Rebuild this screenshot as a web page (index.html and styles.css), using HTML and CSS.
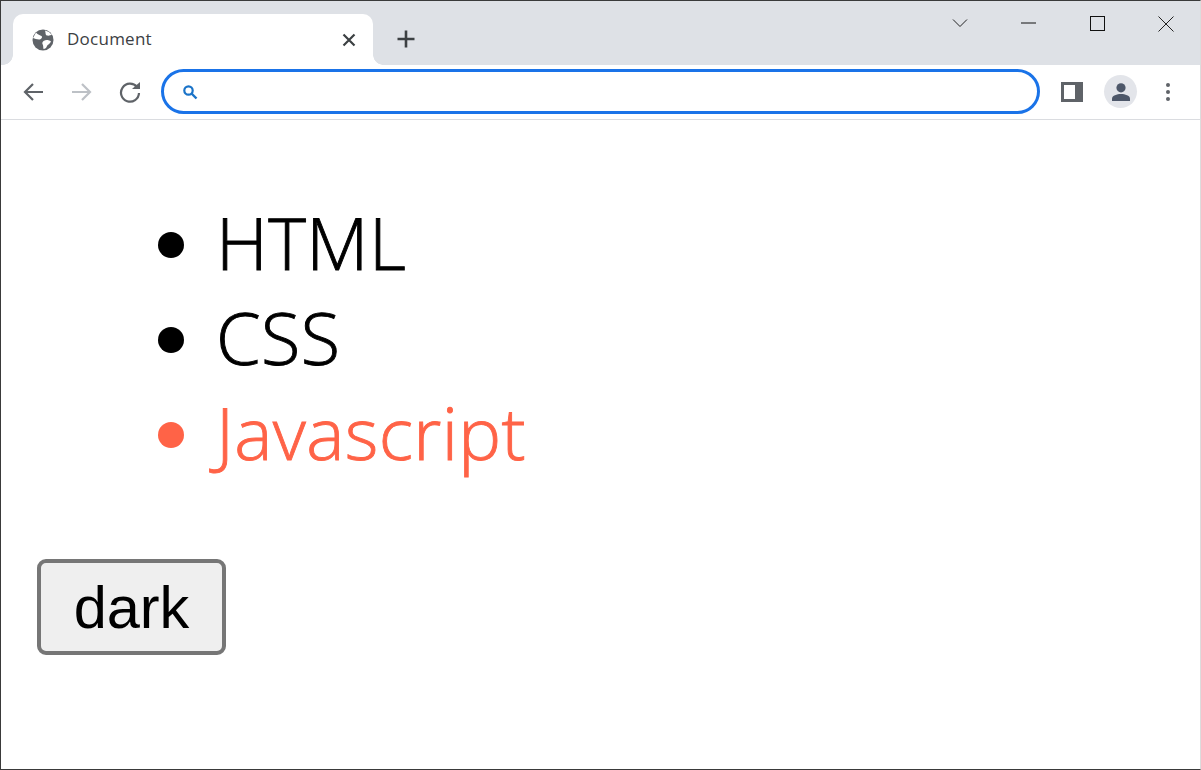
FILE: index.html
```html
<!DOCTYPE html>
<html lang="en">
<head>
    <meta charset="UTF-8">
    <title>Document</title>
    <link rel="stylesheet" href="styles.css">
</head>
<body>
    <div class="window">
        <!-- Tab strip -->
        <div class="tabstrip">
            <div class="tab">
                <svg class="favicon" width="22" height="22" viewBox="0 0 22 22">
                    <circle cx="11" cy="11" r="10.5" fill="#5f6368"/>
                    <path d="M4 3.5 C6 6 8 6 9.5 7 C11 8.5 9 10.5 7 10.5 C4.5 10.5 3 9.5 1 9 Z" fill="#fff"/>
                    <path d="M13 1.5 C14 4 13 6 15 6.5 C17 7 18.5 6 20 6 L17 3 Z" fill="#fff"/>
                    <path d="M11.5 12 C14 10.5 17 11 19 12.5 C18 15 15.5 15.5 15 17 C14.5 19 13 20 11.5 20 C11 18 11.5 16.5 10.5 15 C10 14 10.5 12.8 11.5 12 Z" fill="#fff"/>
                </svg>
                <span class="tab-title">Document</span>
                <svg class="tab-close" width="14" height="14" viewBox="0 0 14 14">
                    <path d="M1.5 1.5 L12.5 12.5 M12.5 1.5 L1.5 12.5" stroke="#3c4043" stroke-width="2.2"/>
                </svg>
            </div>
            <svg class="new-tab" width="20" height="20" viewBox="0 0 20 20">
                <path d="M10 1.5 V18.5 M1.5 10 H18.5" stroke="#3c4043" stroke-width="2.6"/>
            </svg>
            <div class="window-controls">
                <svg class="ctl-chevron" width="16" height="10" viewBox="0 0 16 10">
                    <path d="M1 1.5 L8 8.5 L15 1.5" fill="none" stroke="#222" stroke-width="1"/>
                </svg>
                <svg class="ctl-min" width="16" height="2" viewBox="0 0 16 2">
                    <path d="M0 1 H15" stroke="#111" stroke-width="1"/>
                </svg>
                <svg class="ctl-max" width="15" height="15" viewBox="0 0 15 15">
                    <rect x="0.5" y="0.5" width="14" height="14" fill="none" stroke="#111" stroke-width="1"/>
                </svg>
                <svg class="ctl-close" width="16" height="16" viewBox="0 0 16 16">
                    <path d="M0.5 0.5 L15.5 15.5 M15.5 0.5 L0.5 15.5" stroke="#222" stroke-width="1"/>
                </svg>
            </div>
        </div>

        <!-- Toolbar -->
        <div class="toolbar">
            <svg class="nav-btn nav-back" width="22" height="20" viewBox="0 0 22 20">
                <path d="M21 10 H3 M11 2 L3 10 L11 18" fill="none" stroke="#5f6368" stroke-width="2.2"/>
            </svg>
            <svg class="nav-btn" width="22" height="20" viewBox="0 0 22 20">
                <path d="M1 10 H19 M11 2 L19 10 L11 18" fill="none" stroke="#bdc1c6" stroke-width="2.2"/>
            </svg>
            <svg class="nav-btn" width="22" height="22" viewBox="0 0 22 22">
                <path d="M18 6 A9 9 0 1 0 20 12" fill="none" stroke="#5f6368" stroke-width="2.2"/>
                <path d="M13 8 H21 V1 Z" fill="#5f6368"/>
            </svg>
            <div class="omnibox">
                <svg width="16" height="16" viewBox="0 0 16 16">
                    <circle cx="6.5" cy="6.5" r="4.2" fill="none" stroke="#1a73c8" stroke-width="2.2"/>
                    <path d="M9.5 9.5 L14.5 14.5" stroke="#1a73c8" stroke-width="2.4"/>
                </svg>
            </div>
            <svg class="side-panel" width="22" height="20" viewBox="0 0 22 20">
                <path d="M0 0 H22 V20 H0 Z M3 3 V17 H14 V3 Z" fill="#5f6368" fill-rule="evenodd"/>
            </svg>
            <div class="avatar">
                <svg width="20" height="20" viewBox="0 0 20 20">
                    <circle cx="10" cy="5.8" r="4.6" fill="#4d5769"/>
                    <path d="M1 19 V16.5 C1 13.5 6 12 10 12 C14 12 19 13.5 19 16.5 V19 Z" fill="#4d5769"/>
                </svg>
            </div>
            <div class="menu-dots"><i></i><i></i><i></i></div>
        </div>

        <!-- Page -->
        <div class="page">
            <ul class="langs">
                <li>HTML</li>
                <li>CSS</li>
                <li class="active">Javascript</li>
            </ul>
            <button class="theme-btn">dark</button>
        </div>
    </div>
</body>
</html>
```

FILE: styles.css
```css
html, body {
    margin: 0;
    height: 100%;
    background: #fff;
}

.window {
    box-sizing: border-box;
    height: 770px;
    border: 1px solid #3a3a3a;
    border-right-color: #dcdcdc;
    display: flex;
    flex-direction: column;
    overflow: hidden;
}

/* Tab strip */
.tabstrip {
    height: 64px;
    flex: none;
    background: #dee1e6;
    display: flex;
    align-items: flex-end;
    padding-left: 12px;
}

.tab {
    position: relative;
    box-sizing: border-box;
    width: 360px;
    height: 51px;
    background: #fff;
    border-radius: 10px 10px 0 0;
    display: flex;
    align-items: center;
    padding: 0 17px 0 19px;
}

.tab::before, .tab::after {
    content: "";
    position: absolute;
    bottom: 0;
    width: 10px;
    height: 10px;
}

.tab::before {
    left: -10px;
    background: radial-gradient(circle at 0 0, #dee1e6 9.5px, #fff 10px);
}

.tab::after {
    right: -10px;
    background: radial-gradient(circle at 100% 0, #dee1e6 9.5px, #fff 10px);
}

.favicon {
    flex: none;
}

.tab-title {
    flex: 1;
    margin: 0 0 2px 13px;
    font: 17px "Open Sans", sans-serif;
    letter-spacing: 0.25px;
    color: #3c4043;
}

.new-tab {
    margin: 0 0 16px 23px;
}

.window-controls {
    margin-left: auto;
    height: 64px;
    align-self: flex-start;
    display: flex;
    align-items: flex-start;
    padding-right: 26px;
}

.ctl-chevron {
    margin-top: 17px;
}

.ctl-min {
    margin: 21px 0 0 53px;
}

.ctl-max {
    margin: 15px 0 0 53px;
}

.ctl-close {
    margin: 15px 0 0 53px;
}

/* Toolbar */
.toolbar {
    height: 55px;
    flex: none;
    box-sizing: border-box;
    border-bottom: 1px solid #dadce0;
    background: #fff;
    display: flex;
    align-items: center;
    padding: 0 0 1px 21px;
}

.nav-btn {
    margin-right: 26px;
}

.nav-back {
    margin-right: 27px;
}

.omnibox {
    box-sizing: border-box;
    width: 879px;
    height: 45px;
    margin-left: -6px;
    border: 3px solid #1a73e8;
    border-radius: 23px;
    display: flex;
    align-items: center;
    padding-left: 18px;
}

.side-panel {
    margin-left: 21px;
}

.avatar {
    width: 33px;
    height: 33px;
    margin-left: 21px;
    border-radius: 50%;
    background: #e3e5ea;
    display: flex;
    align-items: center;
    justify-content: center;
}

.menu-dots {
    margin-left: 29px;
    display: flex;
    flex-direction: column;
    gap: 3px;
}

.menu-dots i {
    width: 4px;
    height: 4px;
    border-radius: 50%;
    background: #5f6368;
}

/* Page */
.page {
    flex: 1;
    padding: 75px 0 0 36px;
}

.langs {
    margin: 0;
    padding: 0 0 0 179px;
    font: 300 72px/95px "Open Sans", sans-serif;
    letter-spacing: 0.4px;
    -webkit-text-stroke: 0.9px;
    color: #000;
}

.active {
    color: tomato;
}

.theme-btn {
    display: block;
    box-sizing: border-box;
    width: 189px;
    height: 96px;
    margin-top: 79px;
    padding: 0;
    background: #efefef;
    border: 4px solid #767676;
    border-radius: 9px;
    font: 59.5px "Liberation Sans", Arial, sans-serif;
    color: #000;
}
```
